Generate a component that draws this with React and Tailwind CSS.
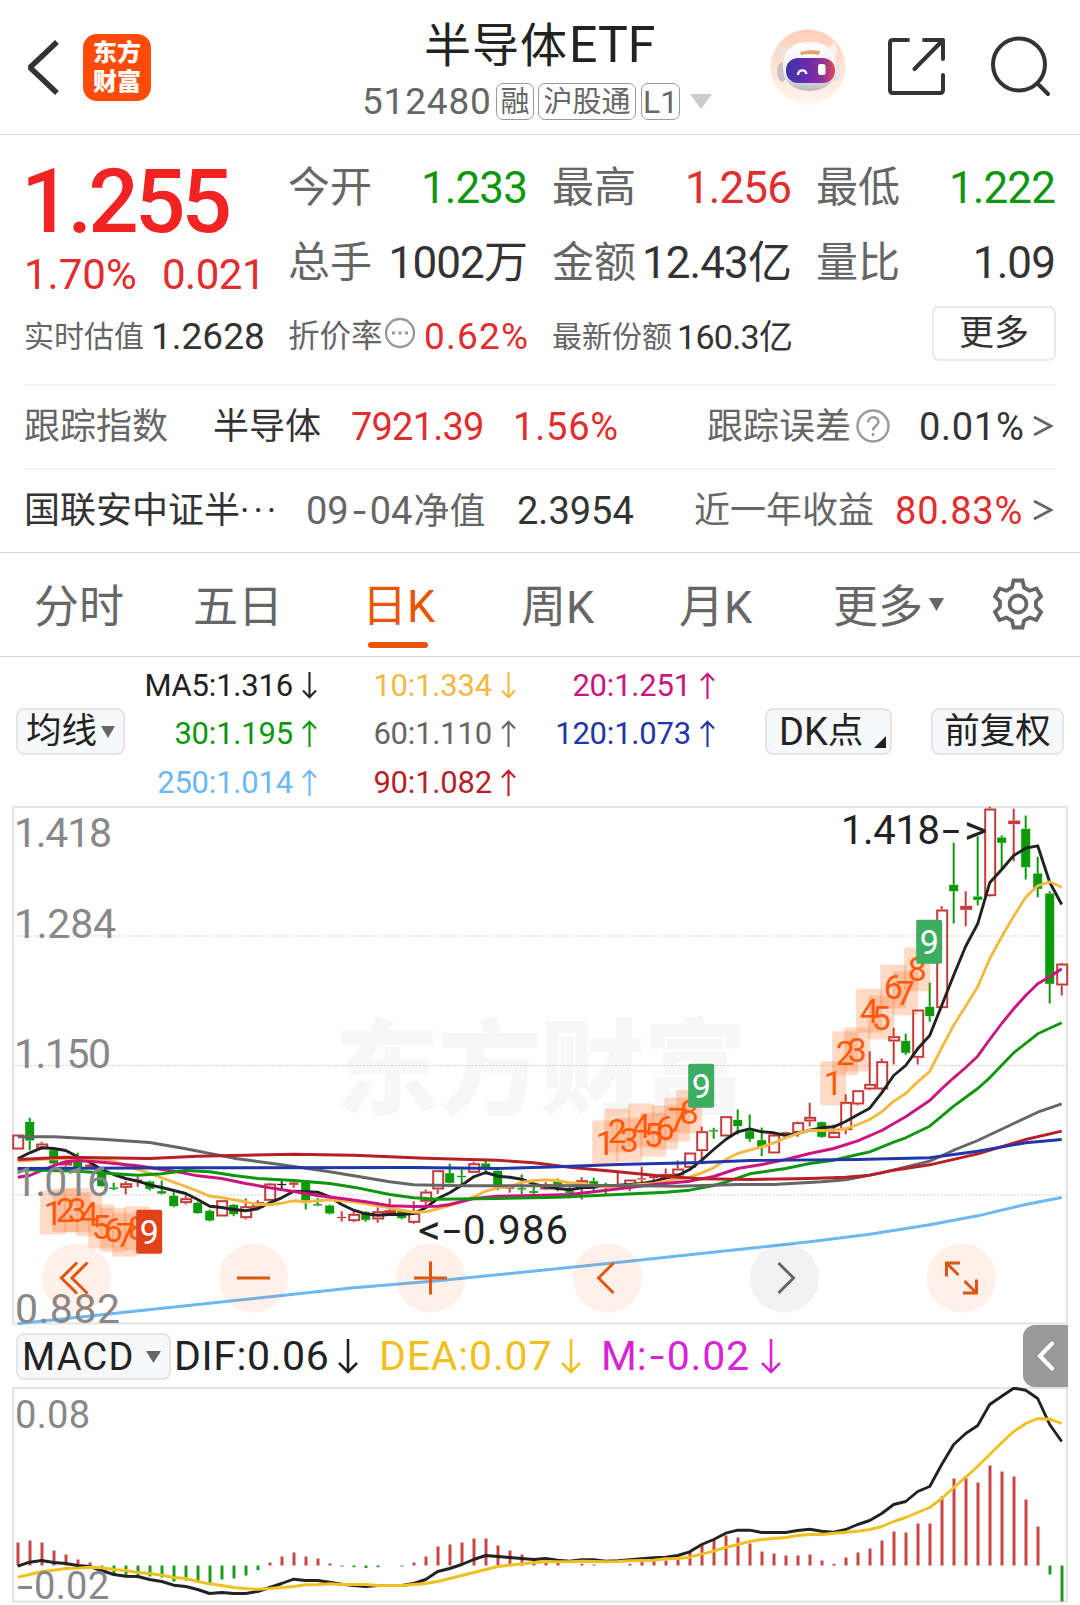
import React from "react";

const STEP = 12;
const xAt = (i) => 17.7 + i * STEP;

// [high, top, bottom, low, kind] in thirds of a pixel, r = up, g = down, k = flat
const candles = [
  [1005, 1005, 1050, 1050, "r"], [955, 967, 1023, 1052, "g"], [1027, 1032, 1047, 1050, "r"],
  [1050, 1052, 1092, 1095, "g"], [1083, 1086, 1098, 1102, "r"], [1060, 1071, 1103, 1106, "g"],
  [1093, 1095, 1102, 1108, "r"], [1110, 1120, 1160, 1162, "g"], [1150, 1164, 1168, 1172, "g"],
  [1145, 1151, 1165, 1185, "r"], [1132, 1140, 1148, 1162, "r"], [1143, 1146, 1168, 1173, "g"],
  [1143, 1175, 1182, 1185, "g"], [1178, 1189, 1220, 1223, "g"], [1188, 1196, 1211, 1215, "r"],
  [1207, 1210, 1241, 1243, "g"], [1230, 1234, 1263, 1266, "g"], [1202, 1202, 1251, 1251, "r"],
  [1213, 1216, 1244, 1250, "g"], [1197, 1220, 1256, 1260, "r"], [1202, 1208, 1225, 1228, "r"],
  [1150, 1152, 1204, 1204, "r"], [1145, 1153, 1157, 1168, "k"], [1148, 1149, 1156, 1165, "r"],
  [1145, 1149, 1211, 1230, "g"], [1195, 1214, 1218, 1220, "g"], [1215, 1218, 1242, 1245, "g"],
  [1235, 1252, 1256, 1266, "r"], [1235, 1243, 1265, 1268, "r"], [1235, 1238, 1261, 1267, "g"],
  [1223, 1235, 1260, 1270, "r"], [1197, 1232, 1243, 1246, "r"], [1232, 1235, 1256, 1260, "g"],
  [1205, 1240, 1270, 1273, "r"], [1170, 1176, 1207, 1220, "r"], [1112, 1112, 1170, 1183, "r"],
  [1093, 1121, 1150, 1152, "g"], [1110, 1129, 1133, 1155, "g"], [1087, 1091, 1120, 1120, "r"],
  [1083, 1092, 1105, 1125, "g"], [1112, 1114, 1157, 1172, "g"], [1158, 1163, 1168, 1180, "r"],
  [1125, 1166, 1170, 1185, "g"], [1150, 1175, 1180, 1185, "g"], [1148, 1154, 1170, 1172, "r"],
  [1137, 1145, 1158, 1175, "g"], [1160, 1175, 1180, 1197, "g"], [1133, 1142, 1162, 1200, "r"],
  [1135, 1145, 1157, 1175, "g"], [1150, 1160, 1165, 1188, "g"], [1120, 1154, 1158, 1160, "r"],
  [1140, 1140, 1162, 1175, "r"], [1102, 1136, 1140, 1157, "r"], [1128, 1130, 1136, 1145, "r"],
  [1107, 1123, 1135, 1137, "r"], [1083, 1107, 1128, 1130, "r"], [1059, 1059, 1105, 1105, "r"],
  [982, 995, 1055, 1080, "r"], [985, 992, 996, 1018, "g"], [950, 950, 1011, 1011, "r"],
  [930, 961, 980, 1005, "g"], [945, 995, 1018, 1027, "g"], [984, 1022, 1043, 1070, "g"],
  [1003, 1005, 1062, 1062, "r"], [997, 998, 1005, 1007, "r"], [966, 968, 1000, 1012, "r"],
  [910, 952, 966, 980, "r"], [966, 968, 1012, 1015, "g"], [975, 997, 1016, 1016, "r"],
  [884, 907, 992, 1004, "r"], [872, 872, 915, 918, "r"], [755, 853, 870, 872, "r"],
  [777, 785, 870, 872, "r"], [685, 710, 726, 795, "r"], [703, 724, 760, 766, "g"],
  [630, 630, 775, 795, "r"], [550, 622, 650, 667, "g"], [320, 330, 626, 626, "r"],
  [130, 256, 275, 372, "g"], [275, 319, 331, 380, "r"], [110, 291, 301, 317, "g"],
  [22, 27, 290, 292, "r"], [108, 114, 130, 208, "g"], [28, 63, 74, 185, "r"],
  [48, 88, 203, 240, "g"], [172, 222, 268, 293, "g"], [275, 282, 553, 612, "g"],
  [490, 492, 558, 588, "r"],
];

const ma5 = [
  1078, 1060, 1045, 1047, 1053, 1072, 1088, 1110, 1125, 1137, 1145, 1156, 1164, 1173, 1182, 1200, 1220, 1224,
  1230, 1234, 1228, 1210, 1195, 1175, 1177, 1178, 1192, 1215, 1232, 1243, 1247, 1245, 1245, 1242, 1225, 1197,
  1180, 1157, 1132, 1119, 1130, 1133, 1139, 1153, 1162, 1167, 1171, 1165, 1163, 1158, 1157, 1155, 1152, 1146,
  1136, 1128, 1110, 1082, 1050, 1020, 997, 988, 997, 1000, 1008, 1002, 992, 985, 982, 966, 946, 926, 880, 828,
  798, 748, 708, 618, 527, 440, 373, 250, 210, 168, 146, 139, 248, 315,
].map((v, i) => [i, v]);

const ma10 = [
  [0, 1085], [3, 1077], [5, 1078], [7, 1080], [8, 1086], [10, 1110], [11, 1121], [12, 1135], [13, 1148], [14, 1161],
  [15, 1175], [16, 1190], [17, 1194], [18, 1201], [19, 1207], [20, 1214], [21, 1216], [22, 1211], [23, 1204],
  [24, 1207], [26, 1201], [28, 1207], [31, 1225], [32, 1232], [33, 1238], [34, 1237], [35, 1228], [36, 1218],
  [37, 1206], [38, 1192], [39, 1175], [40, 1165], [41, 1162], [42, 1148], [43, 1144], [44, 1141], [45, 1144],
  [46, 1150], [47, 1152], [48, 1158], [49, 1162], [50, 1160], [53, 1152], [55, 1138], [56, 1133], [57, 1120],
  [58, 1105], [59, 1080], [60, 1062], [61, 1052], [62, 1042], [63, 1030], [64, 1015], [65, 1002], [66, 992],
  [67, 993], [68, 992], [69, 988], [70, 975], [71, 960], [72, 937], [73, 905], [74, 882], [75, 847], [76, 816],
  [77, 745], [78, 677], [79, 620], [80, 562], [81, 478], [82, 412], [83, 350], [84, 293], [85, 259], [86, 247],
  [87, 263],
];

const ma20 = [
  [0, 1133], [1, 1128], [3, 1098], [4, 1087], [5, 1083], [7, 1088], [10, 1099], [13, 1115], [15, 1129], [17, 1137],
  [19, 1152], [21, 1165], [23, 1176], [25, 1188], [27, 1197], [29, 1207], [31, 1219], [33, 1221], [35, 1220],
  [36, 1215], [38, 1197], [40, 1190], [43, 1188], [46, 1185], [48, 1177], [51, 1164], [53, 1155], [56, 1145],
  [58, 1131], [60, 1107], [62, 1095], [64, 1080], [66, 1062], [68, 1047], [70, 1024], [72, 993], [74, 952],
  [76, 903], [77, 868], [78, 835], [79, 804], [80, 770], [81, 720], [82, 672], [83, 628], [84, 588], [85, 553],
  [86, 532], [87, 508],
];

const ma30 = [
  [0, 1110], [5, 1115], [10, 1127], [12, 1123], [14, 1113], [16, 1117], [18, 1128], [20, 1137], [23, 1143],
  [26, 1152], [28, 1163], [31, 1185], [33, 1195], [35, 1199], [40, 1197], [45, 1193], [50, 1185], [54, 1178],
  [56, 1172], [58, 1158], [59, 1148], [61, 1123], [64, 1107], [66, 1092], [68, 1082], [70, 1065], [71, 1057],
  [73, 1028], [74, 1015], [76, 980], [78, 920], [80, 867], [81, 835], [83, 760], [85, 703], [87, 670],
];

const ma60 = [
  [0, 1012], [3, 1012], [7, 1019], [11, 1029], [14, 1048], [18, 1076], [22, 1096], [26, 1117], [31, 1147],
  [33, 1156], [37, 1159], [43, 1159], [50, 1158], [55, 1160], [60, 1155], [63, 1155], [67, 1147], [69, 1141],
  [72, 1120], [76, 1085], [78, 1052], [80, 1023], [83, 972], [85, 938], [87, 913],
];

const ma90 = [
  [0, 1080], [4, 1073], [11, 1077], [15, 1070], [23, 1064], [28, 1067], [34, 1076], [40, 1082], [43, 1090],
  [46, 1103], [50, 1117], [54, 1131], [57, 1138], [61, 1140], [66, 1137], [69, 1133], [71, 1127], [73, 1112],
  [76, 1096], [80, 1063], [84, 1020], [87, 995],
];

const ma120 = [
  [0, 1107], [15, 1105], [33, 1104], [40, 1107], [45, 1102], [50, 1095], [57, 1089], [61, 1083], [70, 1080],
  [76, 1075], [80, 1055], [84, 1030], [87, 1020],
];

const ma250 = [
  [0, 1573], [28, 1465], [35, 1444], [49, 1393], [58.5, 1356], [66, 1327], [71, 1304], [76, 1276], [80, 1249],
  [84, 1215], [87, 1194],
];

const averages = [
  [ma5, "#222222"],
  [ma10, "#f5b942"],
  [ma20, "#cc1480"],
  [ma30, "#0e960e"],
  [ma60, "#666666"],
  [ma250, "#6bb8f2"],
  [ma90, "#b81f28"],
  [ma120, "#2136a8"],
];

const countdowns = [
  { start: 3, fill: "#e2421a", tops: [1173, 1166, 1166, 1178, 1215, 1225, 1240, 1220, 1231] },
  { start: 49, fill: "#3cad61", tops: [963, 927, 955, 912, 940, 918, 895, 870, 793] },
  { start: 68, fill: "#3cad61", tops: [785, 695, 684, 568, 588, 495, 515, 443, 361] },
];

// Histogram tips; anything past ZERO hangs below the axis
const ZERO = 738;
const bars = [
  669, 663, 669, 693, 705, 720, 729, 750, 765, 768, 768, 771, 774, 786, 783, 790, 795, 780, 777, 768, 752, 729, 711,
  699, 711, 717, 732, 741, 743, 746, 743, 738, 741, 729, 711, 681, 675, 669, 657, 657, 678, 693, 705, 717, 717, 730,
  738, 733, 735, 738, 738, 733, 728, 725, 723, 718, 696, 675, 660, 648, 654, 672, 696, 702, 708, 708, 705, 723, 733,
  714, 699, 687, 663, 636, 639, 612, 612, 531, 477, 477, 489, 438, 456, 471, 540, 621, 765, 846,
];
const dif = [
  740, 728, 723, 729, 732, 738, 741, 753, 765, 770, 771, 780, 786, 797, 801, 810, 822, 819, 822, 822, 816, 804, 792,
  779, 783, 783, 788, 794, 798, 801, 798, 798, 798, 792, 780, 756, 747, 735, 720, 708, 711, 714, 717, 720, 717, 722,
  725, 721, 721, 725, 724, 721, 718, 715, 713, 708, 697, 675, 660, 641, 632, 632, 639, 639, 639, 633, 629, 635, 638,
  630, 615, 603, 582, 555, 546, 516, 501, 435, 375, 342, 318, 255, 230, 206, 212, 237, 315, 366,
];
const dea = [
  773, 765, 756, 752, 747, 746, 743, 745, 750, 753, 759, 762, 767, 774, 777, 786, 793, 798, 804, 807, 809, 807, 804,
  801, 796, 796, 793, 795, 795, 795, 798, 798, 798, 795, 792, 786, 777, 768, 759, 750, 741, 737, 733, 730, 726, 727,
  727, 725, 726, 727, 726, 724, 723, 722, 718, 717, 713, 704, 695, 684, 675, 666, 660, 657, 654, 648, 645, 645, 641,
  638, 635, 630, 621, 606, 594, 579, 564, 537, 504, 473, 440, 405, 370, 336, 312, 297, 299, 312,
];

const toPoints = (list) =>
  list.map(([i, v]) => `${xAt(i).toFixed(1)},${(v / 3).toFixed(1)}`).join(" ");

const candleColor = { r: "#c73a3a", g: "#0a9a0a", k: "#222222" };

const Candle = ({ i, data }) => {
  const [high, top, bottom, low, kind] = data;
  const x = xAt(i);
  const color = candleColor[kind];
  const h = (bottom - top) / 3;
  const hollow = kind === "r" && h > 3;
  return (
    <g stroke={color} strokeWidth="2">
      <path d={`M${x} ${high / 3}V${top / 3}M${x} ${bottom / 3}V${low / 3}`} />
      {hollow ? (
        <rect x={x - 4.5} y={top / 3 + 1} width="10" height={Math.max(h - 2, 1)} fill="none" />
      ) : (
        <rect x={x - 4.5} y={top / 3} width="9" height={Math.max(h, 1)} stroke="none" fill={color} />
      )}
    </g>
  );
};

const Arrow = ({ up, big }) => (
  <svg
    className={big ? "w-[20px] h-[36px] shrink-0" : "w-[15px] h-[27px] shrink-0"}
    viewBox={big ? "0 0 20 36" : "0 0 15 27"}
    fill="none"
    stroke="currentColor"
    strokeWidth={big ? 2.6 : 2.1}
  >
    {big ? (
      <path d="M10 1V34M1 25L10 34L19 25" />
    ) : up ? (
      <path d="M7.5 27V1.5M1 8.5L7.5 1.8L14 8.5" />
    ) : (
      <path d="M7.5 0V25.5M1 18.5L7.5 25.2L14 18.5" />
    )}
  </svg>
);

const Triangle = ({ className }) => (
  <svg className={className} viewBox="0 0 14 11" preserveAspectRatio="none">
    <path d="M0 0H14L7 11Z" fill="currentColor" />
  </svg>
);

const Robot = () => (
  <svg className="w-[76px] h-[76px]" viewBox="0 0 76 76">
    <defs>
      <linearGradient id="halo" x1="0" y1="0" x2="0" y2="1">
        <stop offset="0" stopColor="#ffceb6" />
        <stop offset="1" stopColor="#fff6f1" />
      </linearGradient>
      <linearGradient id="shell" x1="0" y1="0" x2="0" y2="1">
        <stop offset="0" stopColor="#ffffff" />
        <stop offset=".65" stopColor="#ececee" />
        <stop offset="1" stopColor="#b9b7bb" />
      </linearGradient>
      <linearGradient id="visor" x1="0" y1="0" x2="1" y2="0">
        <stop offset="0" stopColor="#3a35a8" />
        <stop offset=".45" stopColor="#6a2bb0" />
        <stop offset=".75" stopColor="#8c3696" />
        <stop offset="1" stopColor="#ea4453" />
      </linearGradient>
    </defs>
    <circle cx="38" cy="38" r="37.5" fill="url(#halo)" />
    <path d="M8 15C5 22 9 27 17 27L23 19C15 20 10 19 8 15Z" fill="#efe3df" />
    <path d="M63 12C69 20 68 27 60 29L54 20C61 19 64 17 63 12Z" fill="#faf5f3" />
    <ellipse cx="12" cy="43" rx="5" ry="10" fill="#c9c3c5" />
    <ellipse cx="66" cy="43" rx="4.500" ry="9" fill="#e9e2e2" />
    <path d="M13 37C13 20 24 13 39 13S66 20 66 36C67 52 58 61 40 62C21 61 13 53 13 37Z" fill="url(#shell)" />
    <path d="M30 23Q40 20 50 22L49 26Q40 24 31 26Z" fill="#e2a06d" />
    <rect x="16" y="29" width="49" height="25" rx="12" fill="url(#visor)" />
    <path d="M28 46C28.500 40 35.500 40 36.500 45" fill="none" stroke="#fff" strokeWidth="2.200" />
    <rect x="48" y="35" width="7.500" height="11" rx="2.500" fill="#fff" />
  </svg>
);

const Header = () => (
  <header className="h-[135px] flex border-b border-[#d8d8d8]">
    <svg className="ml-[25px] mt-[39px] w-[36px] h-[56px]" viewBox="0 0 36 56" fill="none" stroke="#333" strokeWidth="5.500">
      <path d="M32 3L5 28.500L32 54" strokeLinejoin="bevel" />
    </svg>
    <div className="ml-[22px] mt-[34px] w-[68px] h-[67px] rounded-[14px] bg-[#ff4b05] text-white text-[24px] leading-[29px] font-black text-center pt-[5px]">
      <div>东方</div>
      <div>财富</div>
    </div>
    <div className="ml-[211px] w-[352px] flex flex-col">
      <h1 className="ml-[62px] mt-[17px] h-[56px] leading-[56px] text-[47px] text-[#222] whitespace-nowrap">
        <span className="tracking-[1px]">半导体</span>
        <span className="ml-[1px] text-[50px]">ETF</span>
      </h1>
      <div className="mt-[10px] h-[37px] flex items-center text-[#666] text-[29px] leading-[36px]">
        <span className="w-[134px] text-[37px] tracking-[0.8px]">512480</span>
        <span className="w-[38px] h-[37px] border border-[#999] rounded-[7px] text-center">融</span>
        <span className="ml-[4px] w-[98px] h-[37px] border border-[#999] rounded-[7px] text-center">沪股通</span>
        <span className="ml-[5px] w-[39px] h-[37px] border border-[#999] rounded-[7px] text-center text-[32px]">L1</span>
        <Triangle className="ml-[10px] w-[22px] h-[15px] text-[#ccc]" />
      </div>
    </div>
    <div className="ml-[56px] mt-[29px] w-[76px] h-[76px]">
      <Robot />
    </div>
    <svg className="ml-[40px] mt-[36px] w-[62px] h-[62px]" viewBox="0 0 62 62" fill="none" stroke="#333" strokeWidth="4" strokeLinecap="round" strokeLinejoin="round">
      <path d="M22 4H7Q4 4 4 7V54Q4 57 7 57H54Q57 57 57 54V39M38 4H57V23M57 4L28.500 33" />
    </svg>
    <svg className="ml-[41px] mt-[35px] w-[64px] h-[64px]" viewBox="0 0 64 64" fill="none" stroke="#333" strokeWidth="4" strokeLinecap="round">
      <circle cx="30" cy="29.500" r="26" />
      <path d="M49 49L59 59" />
    </svg>
  </header>
);

const Stat = ({ label, value, color, className }) => (
  <div className={`flex justify-between items-center h-[75px] ${className}`}>
    <span className="text-[42px] text-[#666]">{label}</span>
    <span className={`text-[44px] tracking-[-0.9px] ${color}`}>{value}</span>
  </div>
);

const Quote = () => (
  <section className="h-[249px] px-[24px] whitespace-nowrap">
    <div className="flex h-[163px]">
      <div className="w-[264px]">
        <div className="ml-[-3px] mt-[16px] h-[102px] leading-[102px] text-[89px] font-medium text-[#f22323] tracking-[-4px]">1.255</div>
        <div className="mt-[-4px] h-[52px] leading-[52px] flex text-[42px] text-[#e12d2d]">
          <span className="w-[138px]">1.70%</span>
          <span className="tracking-[-0.5px]">0.021</span>
        </div>
      </div>
      <div className="pt-[15px] flex">
        <div className="w-[239px]">
          <Stat label="今开" value="1.233" color="text-[#0e960e]" />
          <Stat label="总手" value="1002万" color="text-[#333]" />
        </div>
        <div className="ml-[25px] w-[239px]">
          <Stat label="最高" value="1.256" color="text-[#e12d2d]" />
          <Stat label="金额" value="12.43亿" color="text-[#333]" />
        </div>
        <div className="ml-[25px] w-[239px]">
          <Stat label="最低" value="1.222" color="text-[#0e960e]" />
          <Stat label="量比" value="1.09" color="text-[#333]" />
        </div>
      </div>
    </div>
    <div className="flex items-center h-[76px] text-[#333] text-[37px]">
      <span className="mt-[2px] w-[127px] text-[30px] text-[#666]">实时估值</span>
      <span className="w-[137px]">1.2628</span>
      <span className="mt-[2px] w-[96px] text-[31.5px] text-[#666]">折价率</span>
      <svg className="w-[32px] h-[32px] mb-[6px]" viewBox="0 0 32 32">
        <circle cx="16" cy="16" r="14" fill="none" stroke="#999" strokeWidth="2.400" />
        <path d="M8 14.500h3v3h-3zM14.500 14.500h3v3h-3zM21 14.500h3v3h-3z" fill="#999" />
      </svg>
      <span className="ml-[8px] w-[128px] tracking-[1.2px] text-[#e12d2d]">0.62%</span>
      <span className="mt-[2px] w-[125px] text-[30px] text-[#666]">最新份额</span>
      <span className="mt-[1px] text-[34px] tracking-[-0.7px]">160.3亿</span>
      <button className="ml-auto mb-[5px] w-[124px] h-[55px] border-2 border-[#e8e9eb] rounded-[7px] text-[35px]">更多</button>
    </div>
  </section>
);

const TrackRow = ({ children }) => (
  <div className="mx-[24px] h-[84px] border-t-2 border-[#f5f5f5] flex items-center text-[36px] text-[#666] whitespace-nowrap">
    {children}
  </div>
);

const More = () => (
  <svg className="ml-auto mr-[3px] mb-[2px] w-[20px] h-[22px]" viewBox="0 0 20 22" fill="none" stroke="#666" strokeWidth="2.800">
    <path d="M1 2L18 11L1 20" />
  </svg>
);

const Tracking = () => (
  <section className="h-[168px]">
    <TrackRow>
      <span className="w-[189px]">跟踪指数</span>
      <span className="w-[138px] text-[#333]">半导体</span>
      <span className="w-[162px] text-[38px] tracking-[-0.8px] text-[#e12d2d]">7921.39</span>
      <span className="w-[170px] text-[38px] tracking-[0.8px] text-[#e12d2d]">1.56%</span>
      <span className="w-[149px] ml-[24px]">跟踪误差</span>
      <svg className="w-[34px] h-[34px] mb-[2px]" viewBox="0 0 34 34" fill="none" stroke="#999" strokeWidth="2.400">
        <circle cx="17" cy="17" r="15.500" />
        <path d="M12 13.500C12 6.500 22.500 6.500 22.500 13C22.500 17 17 16.500 17 21.500" />
        <path d="M17 24V27" />
      </svg>
      <span className="ml-[29px] text-[38px] tracking-[0.7px] text-[#333]">0.01%</span>
      <More />
    </TrackRow>
    <TrackRow>
      <span className="w-[282px] text-[#333]">
        国联安中证半<span className="tracking-[4px]">···</span>
      </span>
      <span className="w-[211px]">
        <span className="text-[38px]">09</span>
        <span className="inline-block w-[21px] text-center text-[38px] scale-x-125">-</span>
        <span className="text-[38px]">04</span>
        <span className="ml-[1px]">净值</span>
      </span>
      <span className="w-[177px] text-[38px] text-[#333]">2.3954</span>
      <span className="w-[201px]">近一年收益</span>
      <span className="text-[38px] tracking-[0.8px] text-[#e12d2d]">80.83%</span>
      <More />
    </TrackRow>
  </section>
);

const Tabs = () => (
  <nav className="h-[105px] border-y border-[#d8d8d8] flex items-center text-[45px] text-[#666] whitespace-nowrap">
    <span className="mt-[5px] ml-[34px] w-[159px]">分时</span>
    <span className="mt-[5px] w-[169px]">五日</span>
    <span className="w-[159px] h-[103px] flex flex-col text-[#ea5504]">
      <span className="h-[89px] leading-[108px]">日K</span>
      <span className="ml-[6px] w-[60px] h-[6px] rounded-full bg-[#ea5504]" />
    </span>
    <span className="mt-[5px] w-[158px]">周K</span>
    <span className="mt-[5px] w-[154px]">月K</span>
    <span className="mt-[5px] w-[96px]">更多</span>
    <Triangle className="w-[15px] h-[13px]" />
    <svg className="ml-[46px] w-[56px] h-[56px] mb-[1px]" viewBox="0 0 56 56" fill="none" stroke="#666" strokeWidth="3.800">
      <path d="M23.500 4.500H32.500L34 11.500L39.500 14.700L46.500 12.500L51 20.500L46 25.500V31L51 36L46.500 44L39.500 41.500L34 44.700L32.500 51.500H23.500L22 44.700L16.500 41.500L9.500 44L5 36L10 31V25.500L5 20.500L9.500 12.500L16.500 14.700L22 11.500Z" />
      <circle cx="28" cy="28" r="8.500" />
    </svg>
  </nav>
);

const maRows = [
  [
    ["MA5:1.316", false, "text-[#222]"],
    ["10:1.334", false, "text-[#f5b942]"],
    ["20:1.251", true, "text-[#cc1480]"],
  ],
  [
    ["30:1.195", true, "text-[#0e960e]"],
    ["60:1.110", true, "text-[#666]"],
    ["120:1.073", true, "text-[#2136a8]"],
  ],
  [
    ["250:1.014", true, "text-[#6bb8f2]"],
    ["90:1.082", true, "text-[#b81f28]"],
  ],
];

const chip = "border-2 border-[#e3e5e8] bg-[#f7f8fa] rounded-[8px] text-[#222] whitespace-nowrap";

const Legend = () => (
  <section className="h-[149px] flex">
    <button className={`${chip} ml-[16px] mt-[51px] w-[109px] h-[47px] text-[35.5px] flex items-center pl-[8px]`}>
      均线
      <Triangle className="ml-[4px] w-[14px] h-[12px] text-[#666]" />
    </button>
    <div className="w-[591px] pt-[4px]">
      {maRows.map((row, r) => (
        <div key={r} className="flex h-[48.5px] items-center">
          {row.map(([text, up, color], c) => (
            <div
              key={text}
              className={`flex items-center justify-end text-[31px] ${color} ${c === 0 ? "w-[192px]" : "w-[199px]"}`}
            >
              <span className="mr-[9px] tracking-[-0.2px]">{text}</span>
              <Arrow up={up} />
            </div>
          ))}
        </div>
      ))}
    </div>
    <button className={`${chip} ml-[49px] mt-[51px] w-[127px] h-[47px] text-[35.5px] flex items-center pl-[12px]`}>
      <span className="text-[38px]">DK</span>点
      <svg className="ml-[11px] mt-[20px] w-[12px] h-[12px]" viewBox="0 0 12 12">
        <path d="M12 0V12H0Z" fill="#222" />
      </svg>
    </button>
    <button className={`${chip} ml-[39px] mt-[51px] w-[133px] h-[47px] text-[35.5px]`}>前复权</button>
  </section>
);

const KChart = () => (
  <svg className="block w-[1080px] h-[519px]" viewBox="0 6.500 1080 519">
    <g stroke="#e3e3e3" strokeWidth="2">
      <rect x="13" y="7.500" width="1054" height="516.500" fill="none" />
    </g>
    <text x="335" y="307" fontSize="104" fontWeight="900" fill="#f7f7f7" textLength="412">
      东方财富
    </text>
    <g stroke="#cfcfcf" strokeWidth="1" strokeDasharray="2 1.500">
      <path d="M13 136.500H1067M13 266H1067M13 395.500H1067" />
    </g>
    {candles.map((c, i) => (
      <Candle key={i} i={i} data={c} />
    ))}
    {averages.map(([list, color]) => (
      <polyline key={color} points={toPoints(list)} fill="none" stroke={color} strokeWidth="2.900" strokeLinejoin="round" />
    ))}
    {countdowns.map(({ start, tops, fill }) =>
      tops.map((top, n) => {
        const x = xAt(start + n);
        const last = n === 8;
        return (
          <g key={`${start}-${n}`}>
            <rect
              x={x - 13.5}
              y={top / 3}
              width="26"
              height="44"
              rx="2"
              fill={last ? fill : "#ff5500"}
              fillOpacity={last ? 1 : 0.22}
            />
            <text x={x - 0.5} y={top / 3 + 34} fontSize="34" textAnchor="middle" fill={last ? "#fff" : "#ff5a0a"}>
              {n + 1}
            </text>
          </g>
        );
      })
    )}
    <g fontSize="40" fill="#222">
      <text x="841" y="44" textLength="99">1.418</text>
      <text x="942" y="44" textLength="18" lengthAdjust="spacingAndGlyphs">-</text>
      <text x="964" y="44" textLength="23" lengthAdjust="spacingAndGlyphs">&gt;</text>
      <text x="418" y="444" textLength="23" lengthAdjust="spacingAndGlyphs">&lt;</text>
      <text x="443" y="444" textLength="18" lengthAdjust="spacingAndGlyphs">-</text>
      <text x="463" y="444" textLength="105">0.986</text>
    </g>
    <g fontSize="41" fill="#888">
      <text x="14" y="47" textLength="98">1.418</text>
      <text x="14" y="138" textLength="102">1.284</text>
      <text x="14" y="268" textLength="97">1.150</text>
      <text x="14" y="396.500" textLength="96">1.016</text>
      <text x="15" y="523" textLength="105">0.882</text>
    </g>
    {[76.5, 253.5, 430.5, 607.5, 784.5, 961.5].map((cx, n) => (
      <circle key={cx} cx={cx} cy="478.500" r="34.500" fill={n === 4 ? "#000" : "#ff5a00"} fillOpacity={n === 4 ? 0.05 : 0.085} />
    ))}
    <g fill="none" stroke="#e0560f" strokeWidth="3">
      <path d="M77 463L61.500 478.500L77 494M87.500 463L72 478.500L87.500 494" />
      <path d="M237 478.500H270" />
      <path d="M414 478.500H447M430.500 462V495" />
      <path d="M613.500 463.500L598.500 478.500L613.500 493.500" />
      <path d="M778.500 463.500L793.500 478.500L778.500 493.500" stroke="#666" />
      <path d="M960 463.500H946.500V477M947 464L958.500 475.500M964.500 481.500L976.500 493.500M976.500 480V493.500H963" />
    </g>
  </svg>
);

const MacdBar = () => (
  <section className="h-[62px] flex text-[41px] whitespace-nowrap">
    <button className={`${chip} ml-[16px] mt-[8px] w-[155px] h-[47px] text-[38px] flex items-center pl-[4px]`}>
      <span className="w-[124px] text-left tracking-[1.2px]">MACD</span>
      <Triangle className="w-[15px] h-[12px] text-[#666]" />
    </button>
    <div className="ml-[3px] w-[205px] h-[62px] flex items-center text-[#222]">
      <span className="w-[164px] tracking-[0.6px]">DIF:0.06</span>
      <Arrow big />
    </div>
    <div className="w-[222px] h-[62px] flex items-center text-[#f0c020]">
      <span className="w-[182px] tracking-[0.8px]">DEA:0.07</span>
      <Arrow big />
    </div>
    <div className="w-[200px] h-[62px] flex items-center text-[#d624d6]">
      <span className="w-[160px]">
        M:<span className="inline-block w-[20px] text-center scale-x-125">-</span>
        <span className="tracking-[0.8px]">0.02</span>
      </span>
      <Arrow big />
    </div>
    <div className="ml-auto mr-[12px] w-[45px] h-[62px] rounded-l-[12px] bg-[#999] flex items-center justify-center">
      <svg className="w-[18px] h-[30px]" viewBox="0 0 18 30" fill="none" stroke="#fff" strokeWidth="4" strokeLinecap="round">
        <path d="M15 2.500L3 15L15 27.500" />
      </svg>
    </div>
  </section>
);

const MacdChart = () => (
  <svg className="block w-[1080px] h-[218px]" viewBox="0 67.500 1080 218">
    <rect x="13" y="68.500" width="1054" height="213.500" fill="none" stroke="#e3e3e3" strokeWidth="2" />
    {bars.map((v, i) =>
      v === ZERO ? null : (
        <path
          key={i}
          d={`M${xAt(i) + 0.3} ${ZERO / 3}V${v / 3}`}
          stroke={v < ZERO ? "#c94444" : "#1c9c1c"}
          strokeWidth="3"
        />
      )
    )}
    <g fill="none" strokeWidth="2.900" strokeLinejoin="round">
      <polyline points={toPoints(dif.map((v, i) => [i, v]))} stroke="#222" />
      <polyline points={toPoints(dea.map((v, i) => [i, v]))} stroke="#f0c020" />
    </g>
    <g fontSize="38" fill="#888">
      <text x="15" y="108.500" textLength="75">0.08</text>
      <text x="17" y="279.500" textLength="16" lengthAdjust="spacingAndGlyphs">-</text>
      <text x="34" y="279.500" textLength="75">0.02</text>
    </g>
  </svg>
);

const App = () => {
  return (
    <div className="w-[1080px] h-[1605px] bg-white overflow-hidden font-['Roboto','Noto_Sans_CJK_SC',sans-serif] leading-none">
      <Header />
      <Quote />
      <Tracking />
      <Tabs />
      <Legend />
      <KChart />
      <MacdBar />
      <MacdChart />
    </div>
  );
};

export default App;
